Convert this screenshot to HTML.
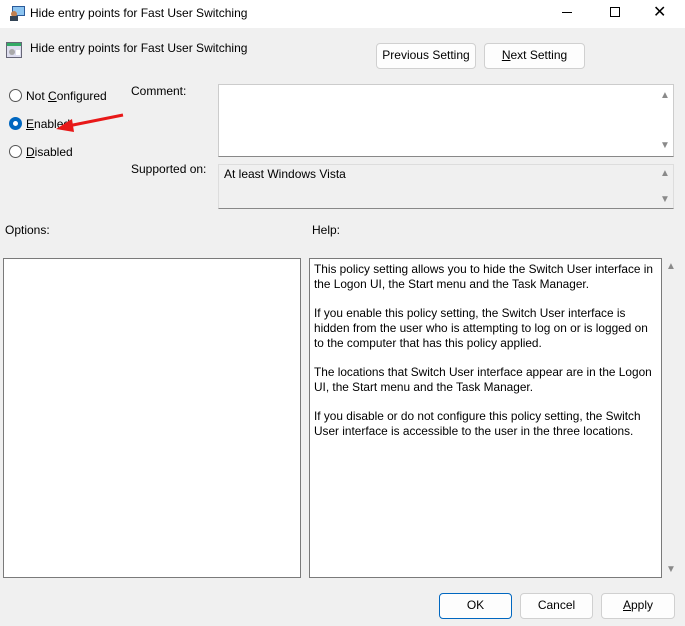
<!DOCTYPE html>
<html><head><style>
*{box-sizing:border-box;margin:0;padding:0}
body{width:685px;height:626px;background:#f0f0f0;font-family:"Liberation Sans",sans-serif;font-size:12px;color:#000;position:relative;overflow:hidden}
.a{position:absolute}
.btn{position:absolute;background:#fdfdfd;border:1px solid #d0d0d0;border-radius:4px;text-align:center;line-height:23px;font-size:12px}
.rad{position:absolute;width:13px;height:13px;border:1px solid #555;border-radius:50%;background:#fff}
.box{position:absolute;background:#fff;border:1px solid #7a7a7a}
.arr{position:absolute;color:#8a8a8a;font-size:10px}
.p{margin-bottom:14px;white-space:nowrap}
</style></head><body>
<div class="a" style="left:0;top:0;width:685px;height:28px;background:#fff"></div>
<svg class="a" style="left:8px;top:4px" width="18" height="18"><rect x="4" y="2" width="13" height="10" fill="#2a5a9a"/><rect x="5" y="3" width="11" height="8" fill="#8cc4f0"/><circle cx="6" cy="10" r="3" fill="#c08050"/><rect x="2" y="12" width="8" height="5" fill="#345"/></svg>
<div class="a" style="left:30px;top:6px;font-size:12px">Hide entry points for Fast User Switching</div>
<div class="a" style="left:562px;top:12px;width:10px;height:1px;background:#000"></div>
<div class="a" style="left:610px;top:7px;width:10px;height:10px;border:1px solid #000"></div>
<div class="a" style="left:653px;top:2px;font-size:16px">✕</div>
<svg class="a" style="left:6px;top:42px" width="16" height="16"><rect x="0.5" y="0.5" width="15" height="15" fill="#dde" stroke="#667"/><rect x="1" y="1" width="14" height="3" fill="#3a6"/><circle cx="6" cy="10" r="3" fill="#aaa"/><rect x="10" y="8" width="4" height="5" fill="#fff"/></svg>
<div class="a" style="left:30px;top:41px">Hide entry points for Fast User Switching</div>
<div class="btn" style="left:376px;top:43px;width:100px;height:26px">Previous Setting</div>
<div class="btn" style="left:484px;top:43px;width:101px;height:26px"><u>N</u>ext Setting</div>
<div class="rad" style="left:9px;top:89px"></div>
<div class="a" style="left:26px;top:89px">Not <u>C</u>onfigured</div>
<div class="rad" style="left:9px;top:117px;border:4px solid #0067c0"></div>
<div class="a" style="left:26px;top:117px"><u>E</u>nabled</div>
<div class="rad" style="left:9px;top:145px"></div>
<div class="a" style="left:26px;top:145px"><u>D</u>isabled</div>
<svg class="a" style="left:50px;top:110px" width="80" height="25"><line x1="73" y1="5" x2="18" y2="16" stroke="#e81818" stroke-width="3"/><polygon points="6,19 22,9 24,22" fill="#e81818"/></svg>
<div class="a" style="left:131px;top:84px">Comment:</div>
<div class="a" style="left:131px;top:162px">Supported on:</div>
<div class="box" style="left:218px;top:84px;width:456px;height:73px;border-color:#ccc;border-bottom-color:#888"></div>
<div class="arr" style="left:660px;top:90px">▲</div><div class="arr" style="left:660px;top:140px">▼</div>
<div class="a" style="left:218px;top:164px;width:456px;height:45px;border:1px solid #ddd;border-bottom-color:#888"></div>
<div class="a" style="left:224px;top:167px">At least Windows Vista</div>
<div class="arr" style="left:660px;top:168px">▲</div><div class="arr" style="left:660px;top:194px">▼</div>
<div class="a" style="left:5px;top:223px">Options:</div>
<div class="a" style="left:312px;top:223px">Help:</div>
<div class="box" style="left:3px;top:258px;width:298px;height:320px"></div>
<div class="box" style="left:309px;top:258px;width:353px;height:320px;padding:3px 4px 3px 4px;line-height:15px;font-size:11.85px;overflow:hidden">
<div class="p">This policy setting allows you to hide the Switch User interface in<br>the Logon UI, the Start menu and the Task Manager.</div>
<div class="p">If you enable this policy setting, the Switch User interface is<br>hidden from the user who is attempting to log on or is logged on<br>to the computer that has this policy applied.</div>
<div class="p">The locations that Switch User interface appear are in the Logon<br>UI, the Start menu and the Task Manager.</div>
<div class="p">If you disable or do not configure this policy setting, the Switch<br>User interface is accessible to the user in the three locations.</div>
</div>
<div class="arr" style="left:666px;top:261px">▲</div><div class="arr" style="left:666px;top:564px">▼</div>
<div class="btn" style="left:439px;top:593px;width:73px;height:26px;border-color:#0067c0">OK</div>
<div class="btn" style="left:520px;top:593px;width:73px;height:26px">Cancel</div>
<div class="btn" style="left:601px;top:593px;width:74px;height:26px"><u>A</u>pply</div>
</body></html>
